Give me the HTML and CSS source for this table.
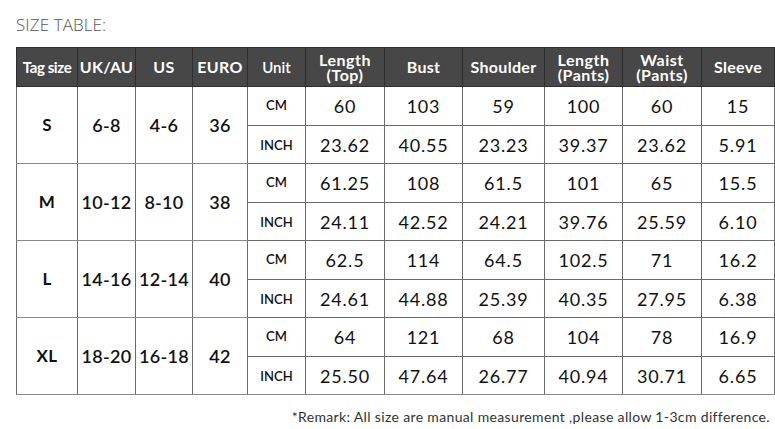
FILE: index.html
```html
<!DOCTYPE html>
<html>
<head>
<meta charset="utf-8">
<link rel="stylesheet" href="styles.css">
</head>
<body>
<div class="page">
  <div class="title">SIZE TABLE:</div>
  <table class="sizes">
    <colgroup>
      <col style="width:61px"><col style="width:58px"><col style="width:57px"><col style="width:55px"><col style="width:58px"><col style="width:79px"><col style="width:78px"><col style="width:82px"><col style="width:78px"><col style="width:79px"><col style="width:73px">
    </colgroup>
    <thead>
      <tr class="head">
        <th class="tag">Tag size</th><th>UK/AU</th><th>US</th><th>EURO</th><th class="unit">Unit</th>
        <th class="two">Length<br>(Top)</th><th>Bust</th><th>Shoulder</th><th class="two">Length<br>(Pants)</th><th class="two">Waist<br>(Pants)</th><th>Sleeve</th>
      </tr>
    </thead>
    <tbody>
      <tr class="r1"><td rowspan="2" class="size">S</td><td rowspan="2" class="g">6-8</td><td rowspan="2" class="g">4-6</td><td rowspan="2" class="g">36</td><td class="u">CM</td><td>60</td><td>103</td><td>59</td><td>100</td><td>60</td><td>15</td></tr>
      <tr class="r2"><td class="u">INCH</td><td>23.62</td><td>40.55</td><td>23.23</td><td>39.37</td><td>23.62</td><td>5.91</td></tr>
      <tr class="r1"><td rowspan="2" class="size">M</td><td rowspan="2" class="g">10-12</td><td rowspan="2" class="g">8-10</td><td rowspan="2" class="g">38</td><td class="u">CM</td><td>61.25</td><td>108</td><td>61.5</td><td>101</td><td>65</td><td>15.5</td></tr>
      <tr class="r2"><td class="u">INCH</td><td>24.11</td><td>42.52</td><td>24.21</td><td>39.76</td><td>25.59</td><td>6.10</td></tr>
      <tr class="r1"><td rowspan="2" class="size">L</td><td rowspan="2" class="g">14-16</td><td rowspan="2" class="g">12-14</td><td rowspan="2" class="g">40</td><td class="u">CM</td><td>62.5</td><td>114</td><td>64.5</td><td>102.5</td><td>71</td><td>16.2</td></tr>
      <tr class="r2"><td class="u">INCH</td><td>24.61</td><td>44.88</td><td>25.39</td><td>40.35</td><td>27.95</td><td>6.38</td></tr>
      <tr class="r1"><td rowspan="2" class="size">XL</td><td rowspan="2" class="g">18-20</td><td rowspan="2" class="g">16-18</td><td rowspan="2" class="g">42</td><td class="u">CM</td><td>64</td><td>121</td><td>68</td><td>104</td><td>78</td><td>16.9</td></tr>
      <tr class="r2 last"><td class="u">INCH</td><td>25.50</td><td>47.64</td><td>26.77</td><td>40.94</td><td>30.71</td><td>6.65</td></tr>
    </tbody>
  </table>
  <div class="remark">*Remark: All size are manual measurement ,please allow 1-3cm difference.</div>
</div>
</body>
</html>
```
FILE: styles.css
```css
html, body {
  margin: 0;
  padding: 0;
  background: #ffffff;
}
.page {
  width: 775px;
  height: 429px;
  padding: 15px 0 0 16px;
  box-sizing: border-box;
  font-family: "Lato", "Open Sans", sans-serif;
  color: #111;
}
.title {
  font-family: "Open Sans", sans-serif;
  font-weight: 300;
  font-size: 17px;
  line-height: 20px;
  color: #555;
  letter-spacing: 0.1px;
  margin-bottom: 12px;
}
.sizes {
  border-collapse: collapse;
  table-layout: fixed;
  width: 759px;
}
.sizes tr.head { height: 39px; }
.sizes th {
  box-sizing: border-box;
  background: #474747;
  color: #fff;
  font-weight: 700;
  font-size: 16px;
  padding: 0;
  border: 1px solid #2e2e2e;
  text-align: center;
  vertical-align: middle;
  line-height: 16px;
  white-space: nowrap;
  letter-spacing: 0.3px;
}
.sizes th.tag {
  font-size: 15px;
  letter-spacing: -0.4px;
}
.sizes th.unit {
  font-size: 15px;
  font-weight: 600;
  letter-spacing: 0;
}
.sizes th.two {
  line-height: 15px;
  letter-spacing: 0.5px;
}
.sizes tr.r1 { height: 39px; }
.sizes tr.r2 { height: 38px; }
.sizes td {
  box-sizing: border-box;
  border: 1px solid #6a6a6a;
  padding: 0;
  text-align: center;
  vertical-align: middle;
  font-size: 18px;
  line-height: 20px;
  color: #111;
  white-space: nowrap;
  letter-spacing: 0.8px;
}
.sizes td.u {
  font-size: 13px;
  font-weight: 600;
  letter-spacing: 0;
}
.sizes tr.r1 td.u { padding-bottom: 3px; }
.sizes td.size {
  font-weight: 700;
  font-size: 17px;
  letter-spacing: 0.3px;
}
.sizes td.g {
  font-weight: 600;
  font-size: 18px;
  letter-spacing: 0.3px;
}
.sizes tr.last td,
.sizes tr.r1 td.size,
.sizes tr.r1 td.g {
  border-bottom-color: #8a8a8a;
}
.remark {
  text-align: right;
  font-size: 14px;
  line-height: 16px;
  color: #333;
  margin-top: 14px;
  padding-right: 5px;
  letter-spacing: 0.35px;
}
```
